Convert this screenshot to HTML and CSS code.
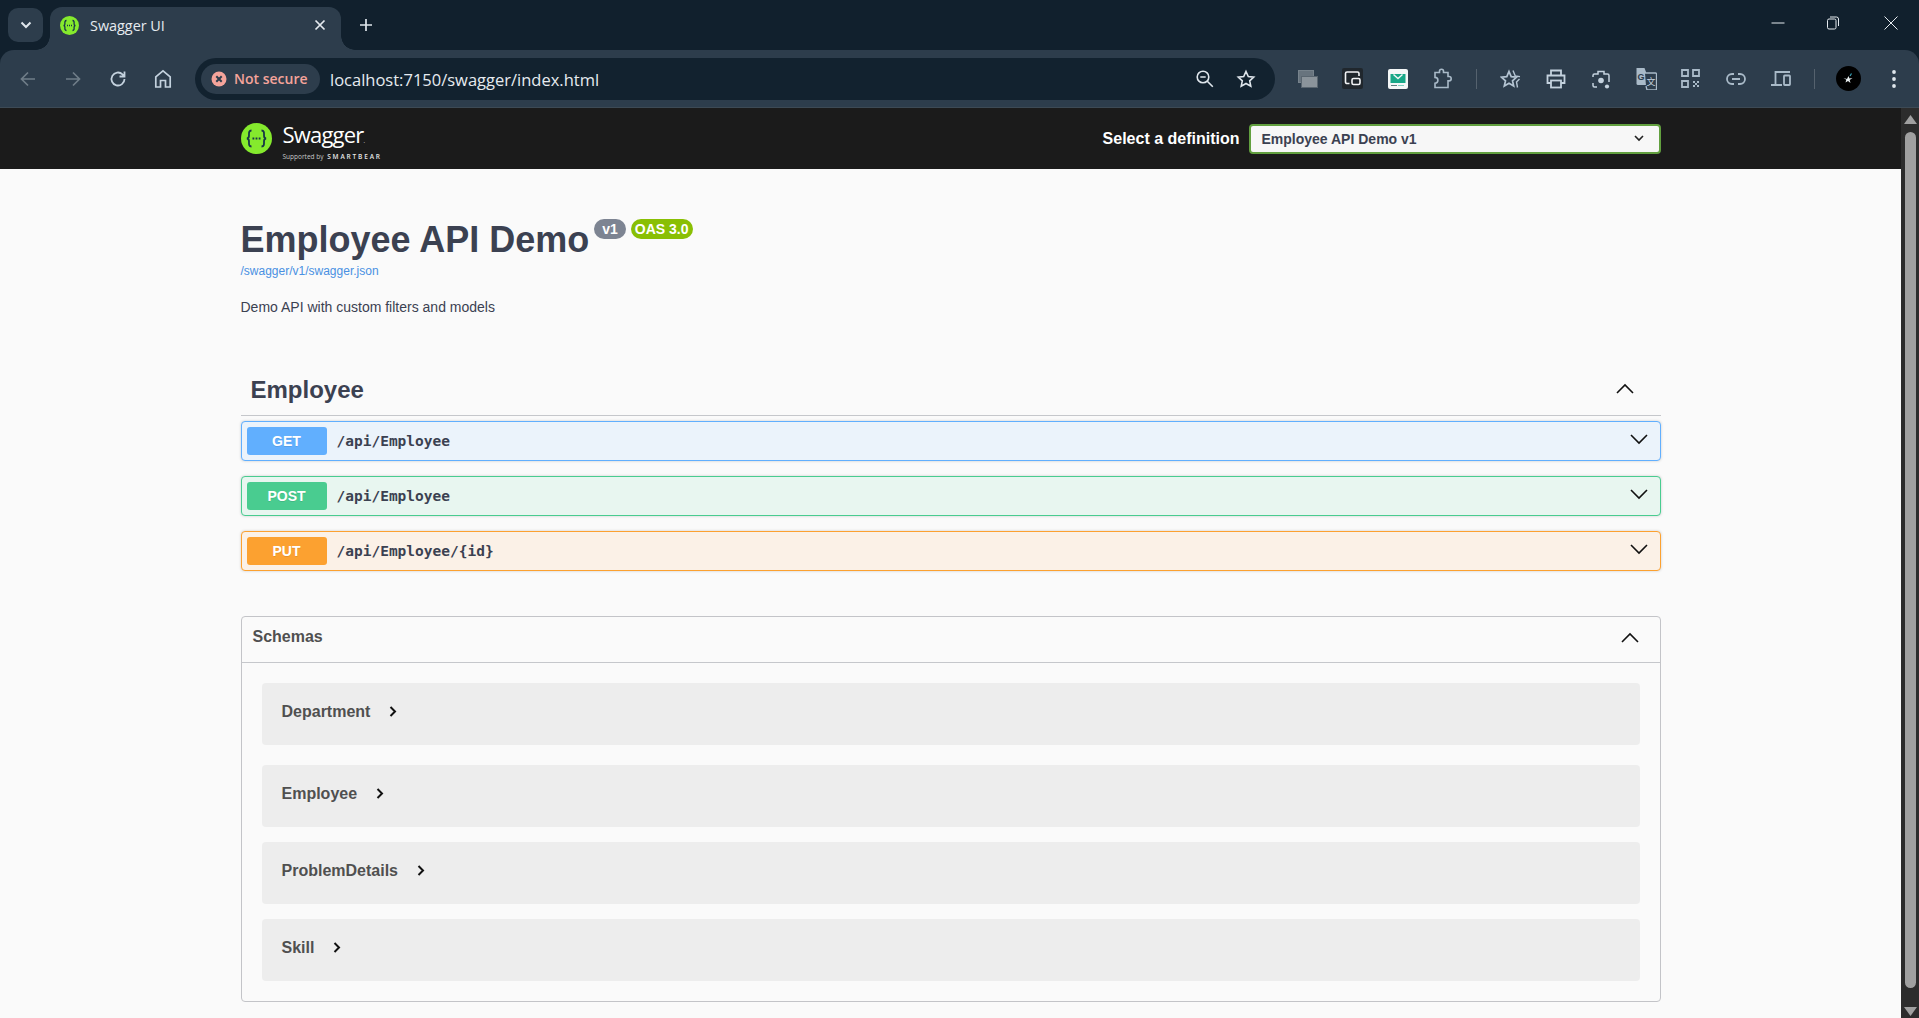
FILE: index.html
```html
<!DOCTYPE html>
<html lang="en">
<head>
<meta charset="utf-8">
<title>Swagger UI</title>
<link rel="stylesheet" href="styles.css">
</head>
<body>
<header class="chrome">
  <div class="tabstrip">
    <div class="tabsearch"><svg width="12" height="8" viewBox="0 0 12 8"><path d="M1.500 1.500 6 6l4.500-4.500" fill="none" stroke="#dfe6ec" stroke-width="2"/></svg></div>
    <div class="tab">
      <svg class="favicon" width="19" height="19" viewBox="0 0 19 19"><circle cx="9.500" cy="9.500" r="9.500" fill="#85ea2d"/><path d="M6.500 4.500c-2 0-1.600 2-1.600 3.400 0 1-.8 1.600-1.400 1.600.6 0 1.400.6 1.400 1.600 0 1.400-.4 3.400 1.600 3.400M12.500 4.500c2 0 1.600 2 1.600 3.400 0 1 .8 1.600 1.400 1.600-.6 0-1.400.6-1.400 1.600 0 1.400.4 3.400-1.600 3.400" fill="none" stroke="#173647" stroke-width="1.300"/><path d="M7 9.500h1M9 9.500h1M11 9.500h1" stroke="#173647" stroke-width="1.300"/></svg>
      <span class="tab-title">Swagger UI</span>
      <svg class="tab-close" width="12" height="12" viewBox="0 0 12 12"><path d="M1.500 1.500l9 9M10.500 1.500l-9 9" stroke="#e6ebf0" stroke-width="1.700"/></svg>
    </div>
    <svg class="newtab" width="14" height="14" viewBox="0 0 14 14"><path d="M7 1v12M1 7h12" stroke="#dfe6ec" stroke-width="1.700"/></svg>
    <div class="winctrl">
      <svg width="14" height="14" viewBox="0 0 14 14"><path d="M.5 7h13" stroke="#e6ebf0" stroke-width="1"/></svg>
      <svg width="14" height="14" viewBox="0 0 14 14"><rect x="1.500" y="3" width="8.500" height="10" rx="1.500" fill="none" stroke="#e6ebf0"/><path d="M4 1h6.500A2 2 0 0 1 12.500 3v7" fill="none" stroke="#e6ebf0"/></svg>
      <svg class="win-close" width="14" height="14" viewBox="0 0 14 14"><path d="M.5.5l13 13M13.500.5l-13 13" stroke="#e6ebf0" stroke-width="1"/></svg>
    </div>
  </div>
  <div class="toolbar">
    <div class="nav">
      <span class="tool"><svg width="20" height="20" viewBox="0 0 20 20"><path d="M17 10H4M10 3.500 3.500 10l6.500 6.500" fill="none" stroke="#6f7d88" stroke-width="1.700"/></svg></span>
      <span class="tool"><svg width="20" height="20" viewBox="0 0 20 20"><path d="M3 10h13M10 3.500l6.500 6.500-6.500 6.500" fill="none" stroke="#6f7d88" stroke-width="1.700"/></svg></span>
      <span class="tool"><svg width="20" height="20" viewBox="0 0 20 20"><path d="M16.500 10a6.500 6.500 0 1 1-2-4.700L16.500 7.500M16.500 2.500v5h-5" fill="none" stroke="#c4d2de" stroke-width="1.800"/></svg></span>
      <span class="tool"><svg width="20" height="20" viewBox="0 0 20 20"><path d="M2.800 18V7.800L10 1.800l7.200 6V18h-4.700v-6.500h-5V18z" fill="none" stroke="#c4d2de" stroke-width="1.700"/></svg></span>
    </div>
    <div class="omnibox">
      <div class="chip">
        <svg width="16" height="16" viewBox="0 0 16 16"><circle cx="8" cy="8" r="7.500" fill="#f5a49b"/><path d="M5.300 5.300l5.400 5.400M10.700 5.300l-5.400 5.400" stroke="#2d3d4c" stroke-width="2"/></svg>
        <span>Not secure</span>
      </div>
      <span class="url">localhost:7150/swagger/index.html</span>
      <div class="omni-icons">
        <svg width="20" height="20" viewBox="0 0 20 20"><circle cx="8" cy="8" r="5.800" fill="none" stroke="#dfe6ec" stroke-width="1.600"/><path d="M5.300 8h5.400M12.300 12.300l5.500 5.500" stroke="#dfe6ec" stroke-width="1.600"/></svg>
        <svg width="20" height="20" viewBox="0 0 20 20"><path d="M10 2.500l2.300 5 5.400.6-4 3.700 1.100 5.400-4.800-2.700-4.800 2.700 1.100-5.400-4-3.700 5.400-.6z" fill="none" stroke="#dfe6ec" stroke-width="1.600"/></svg>
      </div>
    </div>
    <div class="tools">
      <span class="tool"><svg width="20" height="18" viewBox="0 0 20 18"><rect x=".5" y=".5" width="15" height="12" fill="#68747e" stroke="#77838c"/><rect x="3.500" y="6.500" width="16" height="11" fill="#8b949b" stroke="#5a6670"/></svg></span>
      <span class="tool"><svg width="21" height="21" viewBox="0 0 21 21"><rect width="21" height="21" rx="2" fill="#20272d"/><path d="M7.500 15.500H5A1.500 1.500 0 0 1 3.500 14V5.500A1.500 1.500 0 0 1 5 4h10.500A1.500 1.500 0 0 1 17 5.500V8" fill="none" stroke="#f2f4f6" stroke-width="1.600"/><rect x="10" y="10.500" width="8" height="6" rx="1.500" fill="none" stroke="#f2f4f6" stroke-width="1.600"/></svg></span>
      <span class="tool"><svg width="20" height="20" viewBox="0 0 20 20"><rect width="20" height="20" rx="2" fill="#f4f7f7"/><rect x="2.500" y="5" width="15" height="9" fill="#18a888"/><path d="M5.500 5.500l4.500 4 4.500-4" fill="none" stroke="#f4f7f7" stroke-width="1.400"/><path d="M3 16.500h6" stroke="#5f7f80"/><path d="M10 16.500h6" stroke="#7fd0c0"/></svg></span>
      <span class="tool"><svg width="21" height="21" viewBox="0 0 21 21"><path d="M3 4.500h4.500V3.200a2 2 0 0 1 4 0v1.300H16V8.500h1a2.200 2.200 0 0 1 0 4.400h-1v6.600H3v-4.300a2.900 2.900 0 0 0 0-5.800z" fill="none" stroke="#a9bac8" stroke-width="1.600"/></svg></span>
      <span class="sep"></span>
      <span class="tool"><svg width="22" height="22" viewBox="0 0 22 22"><path d="M9 3.500l2.200 5.200 5.300.5-4 3.600 1.200 5.300L9 15.300l-4.700 2.800 1.200-5.300-4-3.600 5.300-.5z" fill="none" stroke="#b4c4d2" stroke-width="1.700"/><path d="M13 2.500l2.300 5.500 4.700.6M19.500 11l-3 3 1 5.500" fill="none" stroke="#b4c4d2" stroke-width="1.400"/></svg></span>
      <span class="tool"><svg width="22" height="22" viewBox="0 0 22 22"><path d="M6 7V2.500h10V7M6 15H2.500V7.500h17V15H16" fill="none" stroke="#c4d2de" stroke-width="1.800"/><rect x="6" y="12.500" width="10" height="7" fill="none" stroke="#c4d2de" stroke-width="1.800"/></svg></span>
      <span class="tool"><svg width="20" height="22" viewBox="0 0 20 22"><path d="M2 9V7.500A1.500 1.500 0 0 1 3.500 6H7V3.500h6V6h3.500A1.500 1.500 0 0 1 18 7.500V9M2 15v2.500A1.500 1.500 0 0 0 3.500 19H6" fill="none" stroke="#c4d2de" stroke-width="1.500"/><path d="M18 9v5" stroke="#c4d2de" stroke-width="1.500"/><circle cx="10" cy="12.500" r="2.800" fill="#c4d2de"/><circle cx="16" cy="18.500" r="2.100" fill="#c4d2de"/></svg></span>
      <span class="tool"><svg class="translate" width="22" height="22" viewBox="0 0 22 22"><path d="M1.500 0h8l1.500 4v13H3a1.500 1.500 0 0 1-1.500-1.500z" fill="#a9bac8"/><path d="M10 5h10.500a1 1 0 0 1 1 1v15a1 1 0 0 1-1 1H12l-1-4" fill="#2d3d4c" stroke="#a9bac8" stroke-width="1.300"/><text x="2.500" y="12" class="tr-g">G</text><text x="11.500" y="17" class="tr-z">文</text></svg></span>
      <span class="tool"><svg width="19" height="19" viewBox="0 0 19 19"><path d="M1 1h6v6H1zM12 1h6v6h-6zM1 12h6v6H1z" fill="none" stroke="#a9bac8" stroke-width="1.800"/><path d="M12 12h2v2h-2zM16 12h2v2h-2zM14 14h2v2h-2zM12 16h2v2h-2zM16 16h2v2h-2z" fill="#a9bac8"/></svg></span>
      <span class="tool"><svg width="20" height="12" viewBox="0 0 20 12"><path d="M8 1H6a5 5 0 0 0 0 10h2M12 1h2a5 5 0 0 1 0 10h-2M6 6h8" fill="none" stroke="#a9bac8" stroke-width="1.800"/></svg></span>
      <span class="tool"><svg width="20" height="15" viewBox="0 0 20 15"><path d="M4.500 13.500V1H19M0 14h11" fill="none" stroke="#a9bac8" stroke-width="1.800"/><rect x="13" y="4.500" width="6" height="9.500" rx=".8" fill="none" stroke="#a9bac8" stroke-width="1.800"/></svg></span>
      <span class="sep"></span>
      <span class="tool"><svg width="25" height="25" viewBox="0 0 25 25"><circle cx="12.500" cy="12.500" r="12.500" fill="#000"/><path d="M7.500 12l3.500 1 1.500-3 1 2.500 3-.5-2.800 2 .8 3-2.500-2-2.500 1.500.8-2.700z" fill="#e8eef0"/><path d="M14 10l1.500-2.500" stroke="#38a3b8" stroke-width="1.200"/></svg></span>
      <span class="tool"><svg width="6" height="20" viewBox="0 0 6 20"><circle cx="3" cy="3" r="1.900" fill="#dfe6ec"/><circle cx="3" cy="10" r="1.900" fill="#dfe6ec"/><circle cx="3" cy="17" r="1.900" fill="#dfe6ec"/></svg></span>
    </div>
  </div>
</header>

<div class="viewport">
  <div class="page">
    <div class="topbar">
      <div class="wrap topbar-inner">
        <div class="logo">
          <svg width="31" height="31" viewBox="0 0 31 31"><circle cx="15.500" cy="15.500" r="15.500" fill="#85ea2d"/><path d="M10.500 7.500c-3 0-2.500 3-2.500 5 0 2-1 3-2.200 3 1.200 0 2.200 1 2.200 3 0 2-.5 5 2.500 5M20.500 7.500c3 0 2.500 3 2.500 5 0 2 1 3 2.200 3-1.200 0-2.200 1-2.200 3 0 2 .5 5-2.500 5" fill="none" stroke="#173647" stroke-width="1.800"/><path d="M11.500 15.500h1.800M14.600 15.500h1.800M17.700 15.500h1.800" stroke="#173647" stroke-width="1.800"/></svg>
          <div class="logo-text">
            <span class="logo-name">Swagger<small>.</small></span>
            <span class="logo-sub">Supported by <b>SMARTBEAR</b></span>
          </div>
        </div>
        <form class="definition">
          <label class="definition-label">Select a definition</label>
          <div class="select">
            <span>Employee API Demo v1</span>
            <svg width="10" height="7" viewBox="0 0 10 7"><path d="M1 1l4 4 4-4" fill="none" stroke="#222" stroke-width="1.600"/></svg>
          </div>
        </form>
      </div>
    </div>

    <div class="wrap">
      <section class="info">
        <div class="title-row">
          <h1 class="title">Employee API Demo</h1>
          <span class="badge badge-version">v1</span>
          <span class="badge badge-oas">OAS 3.0</span>
        </div>
        <a class="spec-link">/swagger/v1/swagger.json</a>
        <p class="description">Demo API with custom filters and models</p>
      </section>

      <section class="tag">
        <div class="tag-head">
          <h3 class="tag-name">Employee</h3>
          <svg class="tag-chevron" width="20" height="20" viewBox="0 0 20 20"><path d="M2 14l8-8 8 8" fill="none" stroke="#111" stroke-width="1.600"/></svg>
        </div>
        <div class="op op-get">
          <span class="method">GET</span><span class="path">/api/Employee</span>
          <svg width="20" height="20" viewBox="0 0 20 20"><path d="M2 6l8 8 8-8" fill="none" stroke="#111" stroke-width="1.600"/></svg>
        </div>
        <div class="op op-post">
          <span class="method">POST</span><span class="path">/api/Employee</span>
          <svg width="20" height="20" viewBox="0 0 20 20"><path d="M2 6l8 8 8-8" fill="none" stroke="#111" stroke-width="1.600"/></svg>
        </div>
        <div class="op op-put">
          <span class="method">PUT</span><span class="path">/api/Employee/{id}</span>
          <svg width="20" height="20" viewBox="0 0 20 20"><path d="M2 6l8 8 8-8" fill="none" stroke="#111" stroke-width="1.600"/></svg>
        </div>
      </section>

      <section class="schemas">
        <div class="schemas-head">
          <h4 class="schemas-title">Schemas</h4>
          <svg width="20" height="20" viewBox="0 0 20 20"><path d="M2 14l8-8 8 8" fill="none" stroke="#111" stroke-width="1.600"/></svg>
        </div>
        <div class="schemas-body">
          <div class="model model-first"><span>Department</span><svg width="8" height="11" viewBox="0 0 8 11"><path d="M1.500 1l4.500 4.500-4.500 4.500" fill="none" stroke="#111" stroke-width="2"/></svg></div>
          <div class="model"><span>Employee</span><svg width="8" height="11" viewBox="0 0 8 11"><path d="M1.500 1l4.500 4.500-4.500 4.500" fill="none" stroke="#111" stroke-width="2"/></svg></div>
          <div class="model"><span>ProblemDetails</span><svg width="8" height="11" viewBox="0 0 8 11"><path d="M1.500 1l4.500 4.500-4.500 4.500" fill="none" stroke="#111" stroke-width="2"/></svg></div>
          <div class="model model-last"><span>Skill</span><svg width="8" height="11" viewBox="0 0 8 11"><path d="M1.500 1l4.500 4.500-4.500 4.500" fill="none" stroke="#111" stroke-width="2"/></svg></div>
        </div>
      </section>
    </div>
  </div>

  <div class="scrollbar">
    <svg class="sb-arrow" width="13" height="9" viewBox="0 0 13 9"><path d="M6.500 0 13 9H0z" fill="#a0a0a0"/></svg>
    <div class="sb-thumb"></div>
    <svg class="sb-arrow" width="13" height="9" viewBox="0 0 13 9"><path d="M0 0h13L6.500 9z" fill="#a0a0a0"/></svg>
  </div>
</div>
</body>
</html>
```
FILE: styles.css
```css
* { box-sizing: border-box; }
html, body { margin: 0; height: 1018px; overflow: hidden; }
body { display: flex; flex-direction: column; font-family: "Liberation Sans", Arial, sans-serif; background: #fafafa; color: #3b4151; }
h1, h3, h4, p { margin: 0; }

.chrome { flex: none; height: 108px; background: #11202d; font-family: "Open Sans", "Noto Sans", sans-serif; }
.tabstrip { height: 50px; display: flex; align-items: flex-end; position: relative; padding-left: 8px; }
.tabsearch { width: 35px; height: 34px; margin-bottom: 8px; border-radius: 10px; background: #2d3d4c; display: flex; align-items: center; justify-content: center; }
.tab { position: relative; width: 291px; height: 43px; margin-left: 7px; padding: 0 15px 7px 10px; background: #2d3d4c; border-radius: 12px 12px 0 0; display: flex; align-items: center; }
.tab::before, .tab::after { content: ""; position: absolute; bottom: 0; width: 14px; height: 14px; }
.tab::before { right: 100%; background: radial-gradient(circle at 0 0, transparent 13.500px, #2d3d4c 14px); }
.tab::after { left: 100%; background: radial-gradient(circle at 100% 0, transparent 13.500px, #2d3d4c 14px); }
.favicon { flex: none; }
.tab-title { margin-left: 11px; flex: 1; font-size: 14.400px; color: #e6ebf0; }
.newtab { margin: 0 0 18px 18px; }
.winctrl { margin-left: auto; padding-right: 21px; display: flex; gap: 41px; align-self: flex-start; margin-top: 16px; }
.win-close { margin-left: 3px; }
.toolbar { position: relative; height: 58px; background: #2d3d4c; border-bottom: 1px solid #3d4a55; border-radius: 14px 14px 0 0; display: flex; align-items: center; padding-left: 5px; }
.nav { display: flex; width: 181px; flex: none; }
.tool { width: 45px; height: 30px; flex: none; display: flex; align-items: center; justify-content: center; }
.omnibox { width: 1080px; height: 42px; flex: none; margin-left: 9px; background: #12222f; border-radius: 21px; display: flex; align-items: center; padding: 0 5px 0 6px; }
.chip { width: 119px; height: 30px; flex: none; background: #2d3d4c; border-radius: 15px; display: flex; align-items: center; gap: 7px; padding-left: 10px; font-size: 14px; font-weight: 600; color: #f5a49b; white-space: nowrap; }
.url { margin-left: 10px; padding-top: 2px; font-size: 16.500px; color: #e6ebf0; flex: 1; white-space: nowrap; }
.omni-icons { display: flex; gap: 21px; padding-right: 14px; }
.tools { display: flex; align-items: center; margin-left: 10px; }
.sep { width: 1px; height: 20px; background: #55626e; margin: 0 11px; flex: none; }
.tr-g { font-family: "Liberation Sans", sans-serif; font-size: 9px; font-weight: 700; fill: #2d3d4c; }
.tr-z { font-family: "Noto Sans CJK SC", sans-serif; font-size: 9px; fill: #c4d2de; }

.viewport { flex: 1; display: flex; min-height: 0; }
.page { flex: 1; min-width: 0; overflow: hidden; }
.wrap { max-width: 1460px; margin: 0 auto; padding: 0 20px; }
.topbar { height: 61px; background: #1b1b1b; }
.topbar-inner { height: 100%; display: flex; align-items: center; justify-content: space-between; }
.logo { display: flex; align-items: center; gap: 11px; }
.logo-text { display: flex; flex-direction: column; padding-top: 6px; font-family: "Open Sans", sans-serif; color: #fff; }
.logo-name { margin-bottom: -2px; font-size: 22px; font-weight: 400; line-height: 24px; letter-spacing: -.8px; }
.logo-name small { font-size: 6px; letter-spacing: 0; }
.logo-sub { font-size: 6.500px; line-height: 11px; color: #c8c8c8; white-space: nowrap; }
.logo-sub b { margin-left: 2px; font-weight: 600; letter-spacing: 1.850px; color: #e8e8e8; }
.definition { display: flex; align-items: center; gap: 9px; }
.definition-label { font-size: 16px; font-weight: 700; color: #fff; }
.select { width: 412px; height: 30px; padding: 0 15px 0 11px; background: #f7f7f7; border: 2px solid #62a03f; border-radius: 4px; display: flex; align-items: center; justify-content: space-between; font-size: 14px; font-weight: 700; color: #3b4151; }

.info { padding-top: 50px; }
.title-row { display: flex; align-items: flex-start; height: 41px; }
.title { font-size: 36px; font-weight: 700; line-height: 41px; white-space: nowrap; }
.badge { height: 20px; border-radius: 10px; font-size: 14px; font-weight: 700; line-height: 20px; color: #fff; }
.badge-version { margin-left: 5px; padding: 0 8px; background: #7d8492; }
.badge-oas { margin-left: 5px; padding: 0 4px; background: #89bf04; }
.spec-link { display: block; margin-top: 4px; font-size: 12px; line-height: 14px; color: #4990e2; }
.description { margin-top: 21px; font-size: 14px; line-height: 16px; }

.tag { margin-top: 51px; }
.tag-head { height: 50px; padding: 0 0 2px 10px; margin-bottom: 5px; border-bottom: 1px solid #c5c7cb; display: flex; align-items: center; justify-content: space-between; }
.tag-name { font-size: 24px; font-weight: 700; line-height: 30px; }
.tag-chevron { margin-right: 26px; margin-bottom: 1px; }
.op { height: 40px; margin-bottom: 15px; padding: 0 11px 0 5px; border: 1px solid; border-radius: 4px; display: flex; align-items: center; box-shadow: 0 0 3px rgba(0,0,0,.19); }
.op svg { margin-left: auto; margin-bottom: 4px; }
.method { width: 80px; height: 28px; border-radius: 3px; color: #fff; font-size: 14px; font-weight: 700; line-height: 28px; text-align: center; text-shadow: 0 1px 0 rgba(0,0,0,.1); }
.path { margin-left: 10px; font-family: "DejaVu Sans Mono", "Liberation Mono", monospace; font-size: 14.500px; font-weight: 700; color: #3b4151; }
.op-get { background: #ebf3fb; border-color: #61affe; }
.op-get .method { background: #61affe; }
.op-post { background: #e8f6f0; border-color: #49cc90; }
.op-post .method { background: #49cc90; }
.op-put { background: #fbf1e7; border-color: #fca130; }
.op-put .method { background: #fca130; }

.schemas { margin-top: 45px; height: 386px; border: 1px solid #c3c4c8; border-radius: 4px; }
.schemas-head { height: 46px; padding: 0 15px 0 11px; border-bottom: 1px solid #c5c7cb; display: flex; align-items: center; justify-content: space-between; }
.schemas-title { margin-bottom: 6px; font-size: 16px; font-weight: 700; color: #505050; }
.schemas-head svg { margin-right: 5px; margin-bottom: 3px; }
.schemas-body { padding: 20px 20px 0; }
.model { height: 62px; margin-bottom: 15px; padding: 0 16px 5px 20px; border-radius: 4px; background: #ededed; display: flex; align-items: center; gap: 19px; font-size: 16px; font-weight: 700; color: #505050; }
.model-first { margin-bottom: 20px; }
.model-last { margin-bottom: 0; }

.scrollbar { width: 18px; flex: none; background: #2c2c2c; display: flex; flex-direction: column; align-items: center; padding: 7px 0 2px; }
.sb-thumb { flex: 1; width: 11px; margin: 8px 0 19px; border-radius: 6px; background: #a0a0a0; }
```
